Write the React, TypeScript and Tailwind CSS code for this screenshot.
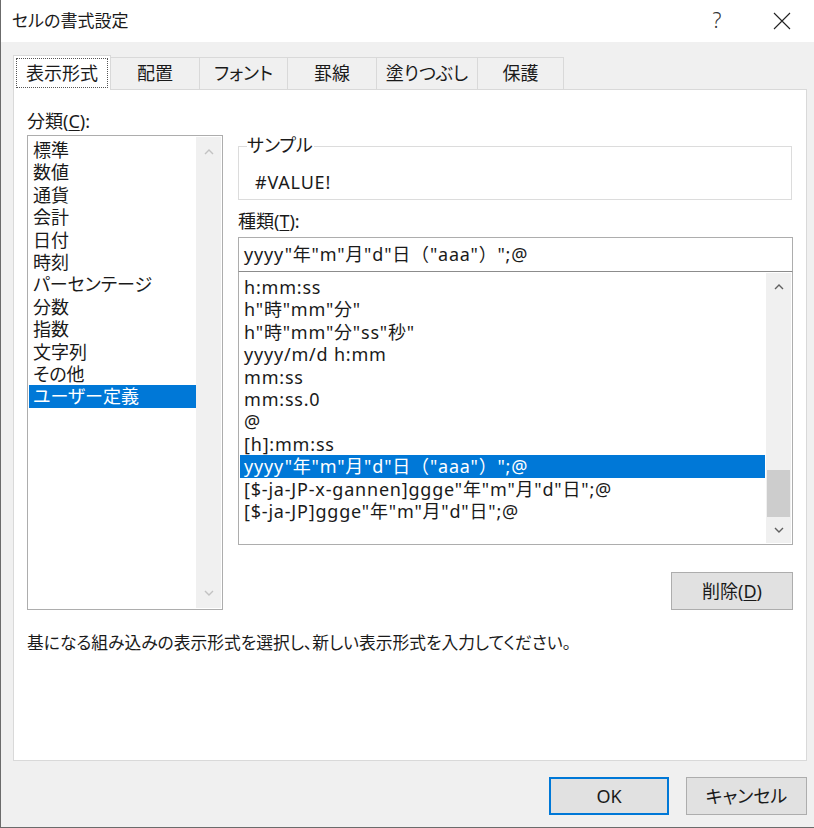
import React from "react";

const FONT = "[font-family:'Noto_Sans','Noto_Sans_CJK_JP',sans-serif]";

const categories = [
  "標準",
  "数値",
  "通貨",
  "会計",
  "日付",
  "時刻",
  "パーセンテージ",
  "分数",
  "指数",
  "文字列",
  "その他",
  "ユーザー定義",
];

const formats = [
  "h:mm:ss",
  'h"時"mm"分"',
  'h"時"mm"分"ss"秒"',
  "yyyy/m/d h:mm",
  "mm:ss",
  "mm:ss.0",
  "@",
  "[h]:mm:ss",
  'yyyy"年"m"月"d"日（"aaa"）";@',
  '[$-ja-JP-x-gannen]ggge"年"m"月"d"日";@',
  '[$-ja-JP]ggge"年"m"月"d"日";@',
];

const tabs = [
  { label: "表示形式", w: "w-[98px]" },
  { label: "配置", w: "w-[89px]" },
  { label: "フォント", w: "w-[88px]" },
  { label: "罫線", w: "w-[89px]" },
  { label: "塗りつぶし", w: "w-[101px]" },
  { label: "保護", w: "w-[86px]" },
];

function Chevron({ up, color }: { up?: boolean; color: string }) {
  return (
    <svg width="10" height="6" viewBox="0 0 10 6" className="block">
      <path
        d={up ? "M1 5 L5 1 L9 5" : "M1 1 L5 5 L9 1"}
        fill="none"
        stroke={color}
        strokeWidth="1.4"
      />
    </svg>
  );
}

function App() {
  return (
    <div
      className={`w-[814px] h-[828px] bg-[#f0f0f0] flex flex-col border-l border-b border-[#6b6b6b] text-[#1a1a1a] ${FONT} [font-feature-settings:'palt']`}
    >
      {/* title bar */}
      <div className="h-[42px] bg-white flex items-center justify-between shrink-0">
        <span className="pl-[11px] text-[17px]">セルの書式設定</span>
        <div className="flex items-center">
          <span className="text-[21px] w-[20px] text-center mr-[46px] text-[#333] font-light">?</span>
          <svg width="18" height="18" viewBox="0 0 18 18" className="mr-[23px]">
            <path d="M1 1 L17 17 M17 1 L1 17" stroke="#222" strokeWidth="1.1" />
          </svg>
        </div>
      </div>

      {/* tabs */}
      <div className="flex items-end pl-[12px] pt-[13px] h-[47px] shrink-0">
        {tabs.map((t, i) =>
          i === 0 ? (
            <div
              key={t.label}
              className={`${t.w} h-[35px] bg-white border border-b-0 border-[#d9d9d9] relative z-10 -mb-px flex items-center justify-center p-[2px]`}
            >
              <div className="w-full h-full border border-dotted border-[#555] flex items-center justify-center text-[18px]">
                {t.label}
              </div>
            </div>
          ) : (
            <div
              key={t.label}
              className={`${t.w} h-[32px] bg-[#f0f0f0] border border-l-0 border-b-0 border-[#d9d9d9] flex items-center justify-center text-[18px]`}
            >
              {t.label}
            </div>
          )
        )}
      </div>

      {/* panel */}
      <div className="ml-[12px] mr-[7px] h-[672px] bg-white border border-[#d9d9d9] flex flex-col shrink-0">
        <div className="flex pt-[20px] pl-[13px] gap-[15px]">
          {/* left */}
          <div className="w-[196px] flex flex-col">
            <div className="text-[18px] leading-[22px] h-[25px]">
              分類(<span className="underline underline-offset-2">C</span>):
            </div>
            <div className="h-[475px] border border-[#adadad] flex p-px">
              <div className="flex-1 pt-[2px] text-[18px] leading-[22.4px]">
                {categories.map((c) =>
                  c === "ユーザー定義" ? (
                    <div key={c} className="bg-[#0078d7] text-white pl-[4px]">
                      {c}
                    </div>
                  ) : (
                    <div key={c} className="pl-[4px]">
                      {c}
                    </div>
                  )
                )}
              </div>
              <div className="w-[25px] bg-[#f0f0f0] flex flex-col items-center justify-between py-[12px]">
                <Chevron up color="#c2c2c2" />
                <Chevron color="#c2c2c2" />
              </div>
            </div>
          </div>

          {/* right */}
          <div className="w-[555px] flex flex-col">
            <div className="relative mt-[36px] h-[54px] border border-[#dcdcdc] mr-px">
              <span className="absolute left-[8px] -top-[13px] bg-white pr-[1px] text-[18px] leading-[22px]">
                サンプル
              </span>
              <div className="pt-[24px] pl-[16px] text-[18px] leading-[22px] tracking-[0.8px]">#VALUE!</div>
            </div>
            <div className="mt-[10px] text-[18px] leading-[22px] h-[27px]">
              種類(<span className="underline underline-offset-2">T</span>):
            </div>
            <div className="h-[35px] border border-[#adadad] border-b-[#8c8c8c] flex items-center pl-[5px] text-[18px] tracking-[0.8px] [font-feature-settings:normal]">
              yyyy"年"m"月"d"日（"aaa"）";@
            </div>
            <div className="h-[273px] border border-t-0 border-[#adadad] flex p-px">
              <div className="flex-1 pt-[3px] text-[18px] leading-[22.4px] tracking-[0.8px] [font-feature-settings:normal] whitespace-nowrap">
                {formats.map((f, i) =>
                  i === 8 ? (
                    <div key={f} className="bg-[#0078d7] text-white pl-[4px] mr-px">
                      {f}
                    </div>
                  ) : (
                    <div key={f} className="pl-[4px]">
                      {f}
                    </div>
                  )
                )}
              </div>
              <div className="w-[25px] bg-[#f0f0f0] flex flex-col items-center">
                <div className="h-[28px] flex items-center justify-center">
                  <Chevron up color="#606060" />
                </div>
                <div className="h-[169px]" />
                <div className="w-[23px] h-[47px] bg-[#cdcdcd]" />
                <div className="flex-1 flex items-center justify-center">
                  <Chevron color="#606060" />
                </div>
              </div>
            </div>
            <div className="flex justify-end mt-[27px]">
              <button className="w-[122px] h-[38px] bg-[#e1e1e1] border border-[#adadad] text-[18px]">
                削除(<span className="underline underline-offset-2">D</span>)
              </button>
            </div>
          </div>
        </div>
        <div className="pl-[13px] mt-[22px] text-[16.75px] leading-[22px]">
          基になる組み込みの表示形式を選択し、新しい表示形式を入力してください。
        </div>
      </div>

      {/* footer */}
      <div className="flex justify-end gap-[17px] pr-[7px] pt-[16px]">
        <button className="w-[120px] h-[38px] bg-[#e1e1e1] border-2 border-[#0078d7] text-[18px]">
          OK
        </button>
        <button className="w-[121px] h-[38px] bg-[#e1e1e1] border border-[#adadad] text-[18px]">
          キャンセル
        </button>
      </div>
    </div>
  );
}

export default App;
